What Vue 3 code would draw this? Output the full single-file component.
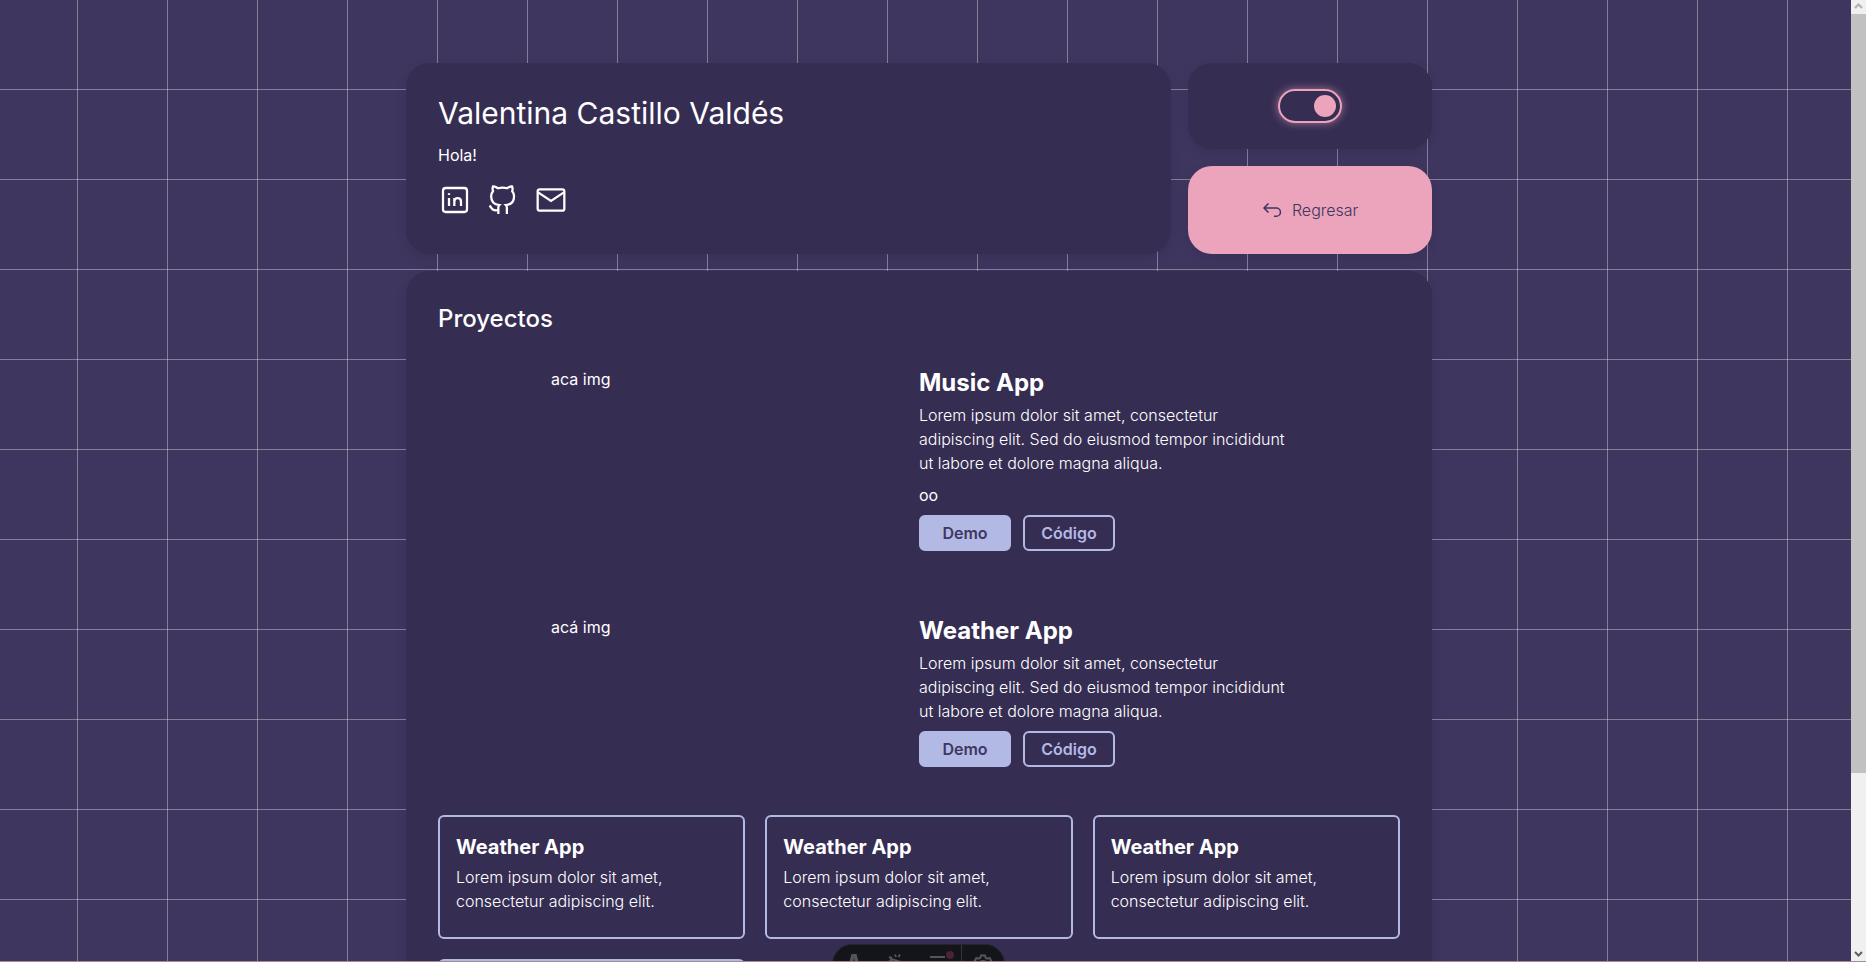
<script setup>
const projects = [
  { title: 'Music App', image: 'aca img', note: 'oo' },
  { title: 'Weather App', image: 'acá img', note: '' },
]
const description =
  'Lorem ipsum dolor sit amet, consectetur adipiscing elit. Sed do eiusmod tempor incididunt ut labore et dolore magna aliqua.'
const cards = [1, 2, 3]
</script>

<template>
  <div class="window">
    <div class="page">
      <main class="bento">
        <header class="card intro">
          <h1>Valentina Castillo Valdés</h1>
          <p>Hola!</p>
          <nav class="social">
            <a href="#linkedin" aria-label="LinkedIn">
              <svg viewBox="0 0 24 24">
                <rect x="3" y="3" width="18" height="18" rx="2" />
                <path d="M7.500 10.500V16.500M7.500 7v1.200M11.500 16.500v-6M11.500 13.300c0-3.500 5-3.500 5 0v3.200" />
              </svg>
            </a>
            <a href="#github" aria-label="GitHub">
              <svg viewBox="0 0 24 24">
                <path d="M14.9 22.5v-4.400c.1-.9-.2-1.700-.8-2.300 3-.3 6.200-1.500 6.200-6.700 0-1.300-.5-2.600-1.400-3.600.4-1.200.4-2.500-.1-3.700 0 0-1.200-.3-3.800 1.400-2.200-.6-4.500-.6-6.700 0-2.600-1.700-3.800-1.400-3.800-1.400-.4 1.200-.4 2.500 0 3.700-.9 1-1.400 2.300-1.400 3.600 0 5.200 3.200 6.400 6.200 6.700-.6.600-.9 1.400-.8 2.300v4.400" />
                <path d="M8.500 19.500c-3 .8-4.500-.3-5.200-1.500-.4-.7-.9-1.300-1.500-1.700" />
              </svg>
            </a>
            <a href="#email" aria-label="Email">
              <svg viewBox="0 0 24 24">
                <rect x="2" y="4" width="20" height="16" rx="1.500" />
                <path d="m2.300 6.300 9.700 6.400 9.700-6.400" />
              </svg>
            </a>
          </nav>
        </header>

        <aside class="side">
          <div class="card theme">
            <input class="switch" type="checkbox" role="switch" checked aria-label="Tema oscuro" />
          </div>
          <a class="card back" href="#inicio">
            <svg viewBox="0 0 20 20">
              <path d="M6.500 3.500 2 8l4.500 4.500M2 8h12.300a4 4 0 0 1 0 8.300H12" />
            </svg>
            <span>Regresar</span>
          </a>
        </aside>

        <section class="card projects">
          <h2>Proyectos</h2>
          <article v-for="p in projects" :key="p.title" class="project">
            <div>{{ p.image }}</div>
            <div class="info">
              <h3>{{ p.title }}</h3>
              <p class="light">{{ description }}</p>
              <p v-if="p.note">{{ p.note }}</p>
              <div class="actions">
                <a class="button filled" href="#demo">Demo</a>
                <a class="button" href="#codigo">Código</a>
              </div>
            </div>
          </article>
          <div class="tiles">
            <article v-for="c in cards" :key="c" class="tile">
              <h4>Weather App</h4>
              <p class="light">Lorem ipsum dolor sit amet, consectetur adipiscing elit.</p>
            </article>
            <article class="tile"></article>
          </div>
        </section>
      </main>
    </div>

    <div class="scrollbar" aria-hidden="true">
      <svg class="arrow muted" viewBox="0 0 15 14"><path d="m4 8 3.500-3.500L11 8" /></svg>
      <div class="track"><div class="thumb"></div></div>
      <svg class="arrow" viewBox="0 0 15 14"><path d="m4 5 3.500 3.500L11 5" /></svg>
    </div>

    <div class="toolbar">
      <button type="button" aria-label="Menu">
        <svg viewBox="0 0 20 20"><path class="solid" d="M7.500 1h5L17 18c-2-1-3-1.300-4.400-1.500L10 5l-2.600 11.500C6 16.700 5 17 3 18z" /></svg>
      </button>
      <button type="button" aria-label="Inspect">
        <svg viewBox="0 0 20 20"><path d="M8 1.500l1 2.500M13 1.500l-1.500 2.500M2 4l3 1M5 17 4 6l13 4-5 2-2 5M1 9l3-1" /></svg>
      </button>
      <button type="button" aria-label="Audit">
        <svg viewBox="0 0 20 20"><path d="M1 4h15M1 9h15M1 14h15" /></svg>
        <span class="alert"></span>
      </button>
      <button type="button" aria-label="Settings" class="settings">
        <svg viewBox="0 0 20 20">
          <path d="M8 2.500h4l.7 2.200 1.600.9 2.300-.6 2 3.500-1.600 1.600v1.800l1.600 1.600-2 3.500-2.300-.6-1.600.9L12 19.500H8l-.7-2.200-1.600-.9-2.300.6-2-3.500L3 11.900v-1.800L1.400 8.500l2-3.500 2.300.6 1.600-.9z" />
          <circle cx="10" cy="11" r="3" />
        </svg>
      </button>
    </div>
  </div>
</template>

<style>
body {
  margin: 0;
  background: #3f3660;
}
</style>

<style scoped>
* {
  box-sizing: border-box;
}
h1,
h2,
h3,
h4,
p {
  margin: 0;
}
a {
  color: inherit;
  text-decoration: none;
}
svg {
  display: block;
  fill: none;
  stroke: currentColor;
  stroke-width: 1.5;
}
.window {
  display: flex;
  position: relative;
  height: 100vh;
  overflow: hidden;
  border-bottom: 1px solid #a28c96;
  color: #fff;
  font: 400 16px/24px Inter, "Noto Sans", sans-serif;
}
.page {
  flex: 1;
  padding: 63px 13px 0 0;
  background-color: #3f3660;
  background-image:
    linear-gradient(to left, rgba(255, 255, 255, 0.36) 1px, transparent 1px),
    linear-gradient(to top, rgba(255, 255, 255, 0.36) 1px, transparent 1px);
  background-size: 90px 90px;
  background-position: -12px 0;
}
.bento {
  display: grid;
  grid-template-columns: repeat(4, 1fr);
  gap: 17px;
  max-width: 1026px;
  margin: 0 auto;
}
.card {
  border-radius: 24px;
  background: #362d53;
  box-shadow: 0 4px 12px rgba(0, 0, 0, 0.1);
}
.intro {
  grid-column: span 3;
  padding: 32px 32px 37px;
}
h1 {
  font-size: 30px;
  font-weight: 400;
  line-height: 36px;
}
.intro p {
  margin-top: 12px;
}
.social {
  display: flex;
  gap: 16px;
  margin-top: 16px;
  padding: 1px;
}
.social svg {
  width: 32px;
  height: 32px;
  stroke-width: 1.7;
}
.side {
  display: flex;
  flex-direction: column;
  gap: 17px;
}
.theme,
.back {
  display: flex;
  align-items: center;
  justify-content: center;
}
.theme {
  height: 86px;
}
.back {
  flex: 1;
  gap: 10px;
  background: #eba4bb;
  color: #3f3660;
  font-weight: 300;
}
.back svg {
  width: 20px;
  height: 20px;
}
.switch {
  appearance: none;
  display: flex;
  align-items: center;
  justify-content: flex-end;
  width: 64px;
  height: 34px;
  margin: 0;
  padding: 4px;
  border: 2px solid #eba4bb;
  border-radius: 17px;
  box-shadow: 0 0 8px rgba(235, 164, 187, 0.6);
}
.switch::before {
  content: "";
  width: 22px;
  height: 22px;
  border-radius: 50%;
  background: #eba4bb;
}
.projects {
  grid-column: span 4;
  padding: 32px;
}
h2 {
  margin-bottom: 32px;
  font-size: 24px;
  font-weight: 500;
  line-height: 32px;
}
.project {
  display: grid;
  grid-template-columns: 1fr 1fr;
  max-width: 736px;
  margin: 0 auto 64px;
}
.project:nth-last-of-type(1) {
  margin-bottom: 48px;
}
.info {
  display: flex;
  flex-direction: column;
  gap: 8px;
}
h3 {
  margin-bottom: -4px;
  font-size: 24px;
  font-weight: 700;
  line-height: 32px;
}
.light {
  font-weight: 300;
}
.actions {
  display: flex;
  gap: 12px;
}
.button {
  width: 92px;
  height: 36px;
  border: 2px solid #b3b9e5;
  border-radius: 6px;
  color: #b3b9e5;
  font-weight: 600;
  line-height: 32px;
  text-align: center;
}
.filled {
  background: #b3b9e5;
  color: #3f3660;
}
.tiles {
  display: grid;
  grid-template-columns: repeat(3, 1fr);
  gap: 20px;
}
.tile {
  height: 124px;
  padding: 16px;
  border: 2px solid #b3b9e5;
  border-radius: 6px;
}
h4 {
  margin-bottom: 4px;
  font-size: 20px;
  font-weight: 700;
  line-height: 28px;
}
.scrollbar {
  display: flex;
  flex-direction: column;
  width: 15px;
  background: #f0f0f0;
}
.arrow {
  width: 15px;
  height: 14px;
  color: #606060;
  stroke-width: 2;
}
.muted {
  color: #b0b0b0;
}
.track {
  flex: 1;
}
.thumb {
  height: 81.4%;
  background: #c1c1c1;
}
.toolbar {
  display: flex;
  position: absolute;
  top: calc(100% - 17px);
  left: 50%;
  width: 173px;
  height: 40px;
  margin-left: -101px;
  overflow: hidden;
  border: 1px solid #25262c;
  border-radius: 20px;
  background: #14151a;
  color: #54545a;
}
.toolbar button {
  display: flex;
  position: relative;
  flex: 1;
  align-items: flex-start;
  padding: 8px 0 0;
  border: 0;
  background: none;
  color: inherit;
}
.toolbar svg {
  width: 20px;
  height: 20px;
  margin: 0 auto;
  stroke-width: 2;
}
.toolbar .solid {
  fill: currentColor;
  stroke: none;
}
.toolbar .settings {
  border-left: 1px solid #34353b;
}
.alert {
  position: absolute;
  top: 6px;
  right: 7px;
  width: 8px;
  height: 8px;
  border-radius: 50%;
  background: #4a2334;
}
</style>
